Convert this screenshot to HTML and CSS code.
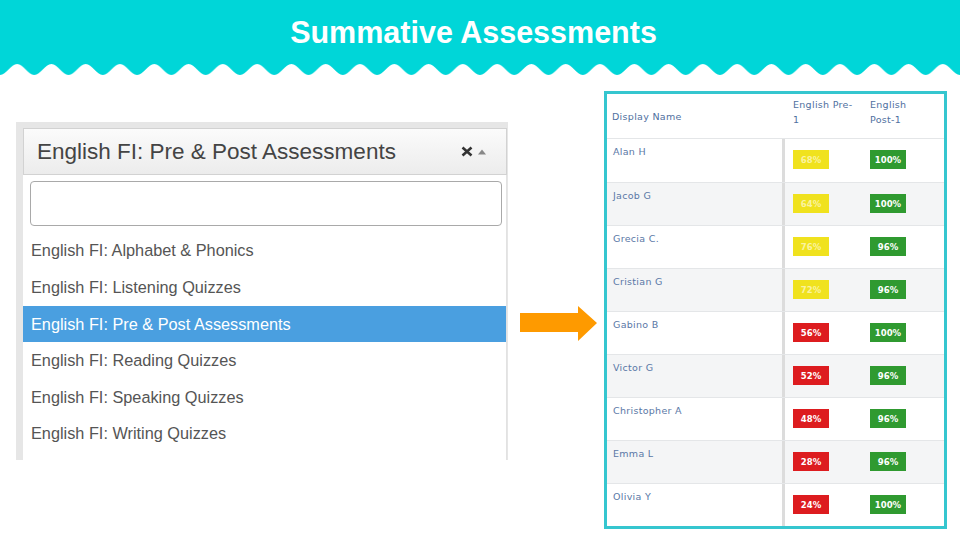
FILE: index.html
```html
<!DOCTYPE html>
<html lang="en">
<head>
<meta charset="utf-8">
<title>Summative Assessments</title>
<link rel="stylesheet" href="styles.css">
</head>
<body>
<header class="hero">
  <div class="hero-bar"><h1>Summative Assessments</h1></div>
  <svg class="wave" width="960" height="14" viewBox="0 0 960 14" aria-hidden="true">
    <defs>
      <pattern id="scallop" width="34.2857" height="14" patternUnits="userSpaceOnUse">
        <path d="M0 0 H34.2857 V13 C28.1 13 23.4 2 17.14 2 C10.9 2 6.2 13 0 13 Z" fill="#00d6d8"/>
      </pattern>
    </defs>
    <rect width="960" height="14" fill="url(#scallop)"/>
  </svg>
</header>

<main class="stage">
  <section class="dd">
    <div class="dd-select">
      <span class="dd-label">English FI: Pre &amp; Post Assessments</span>
      <span class="dd-icons">
        <svg width="12" height="11" viewBox="0 0 12 11"><path d="M1.5 1.5 L10.5 9.5 M10.5 1.5 L1.5 9.5" stroke="#333" stroke-width="2.6" stroke-linecap="butt"/></svg>
        <svg width="8" height="6" viewBox="0 0 8 6"><path d="M0 5.5 L4 0.5 L8 5.5 Z" fill="#888"/></svg>
      </span>
    </div>
    <div class="dd-drop">
      <div class="dd-search"></div>
      <ul class="dd-list">
        <li class="opt">English FI: Alphabet &amp; Phonics</li>
        <li class="opt">English FI: Listening Quizzes</li>
        <li class="opt on">English FI: Pre &amp; Post Assessments</li>
        <li class="opt">English FI: Reading Quizzes</li>
        <li class="opt">English FI: Speaking Quizzes</li>
        <li class="opt">English FI: Writing Quizzes</li>
      </ul>
    </div>
  </section>

  <svg class="arrow" width="77" height="37" viewBox="0 0 77 37" aria-hidden="true">
    <path d="M0 8 H58 V1 L77 18 L58 36 V27 H0 Z" fill="#fe9a00"/>
  </svg>

  <section class="scores">
    <div class="row head">
      <div class="cell name-h">Display Name</div>
      <div class="cell col-h">English Pre-<br>1</div>
      <div class="cell col-h">English<br>Post-1</div>
    </div>
    <div class="row"><div class="cell name">Alan H</div><div class="cell"><span class="badge y">68%</span></div><div class="cell"><span class="badge g">100%</span></div></div>
    <div class="row alt"><div class="cell name">Jacob G</div><div class="cell"><span class="badge y">64%</span></div><div class="cell"><span class="badge g">100%</span></div></div>
    <div class="row"><div class="cell name">Grecia C.</div><div class="cell"><span class="badge y">76%</span></div><div class="cell"><span class="badge g">96%</span></div></div>
    <div class="row alt"><div class="cell name">Cristian G</div><div class="cell"><span class="badge y">72%</span></div><div class="cell"><span class="badge g">96%</span></div></div>
    <div class="row"><div class="cell name">Gabino B</div><div class="cell"><span class="badge r">56%</span></div><div class="cell"><span class="badge g">100%</span></div></div>
    <div class="row alt"><div class="cell name">Victor G</div><div class="cell"><span class="badge r">52%</span></div><div class="cell"><span class="badge g">96%</span></div></div>
    <div class="row"><div class="cell name">Christopher A</div><div class="cell"><span class="badge r">48%</span></div><div class="cell"><span class="badge g">96%</span></div></div>
    <div class="row alt"><div class="cell name">Emma L</div><div class="cell"><span class="badge r">28%</span></div><div class="cell"><span class="badge g">96%</span></div></div>
    <div class="row"><div class="cell name">Olivia Y</div><div class="cell"><span class="badge r">24%</span></div><div class="cell"><span class="badge g">100%</span></div></div>
  </section>
</main>
</body>
</html>
```

FILE: styles.css
```css
* { box-sizing: border-box; }

body {
  margin: 0;
  width: 960px;
  height: 540px;
  overflow: hidden;
  background: #fff;
  font-family: "Liberation Sans", Arial, sans-serif;
}

/* Header */
.hero-bar {
  height: 62px;
  background: #00d6d8;
  display: flex;
  align-items: center;
  justify-content: center;
  padding: 2px 13px 0 0;
}
.hero-bar h1 {
  margin: 0;
  font: bold 30.5px "Liberation Sans", Arial, sans-serif;
  color: #fff;
}
.wave { display: block; }

/* Stage */
.stage {
  display: flex;
  align-items: flex-start;
  padding-left: 16px;
}

/* Dropdown */
.dd {
  width: 492px;
  height: 338px;
  margin-top: 46px;
  background: #e6e6e6;
  padding: 6px 1px 0 7px;
  display: flex;
  flex-direction: column;
}
.dd-select {
  height: 47px;
  border: 1px solid #d2d2d2;
  background: linear-gradient(#fbfbfb, #ececec);
  display: flex;
  align-items: center;
  padding-left: 13px;
  font-size: 22.5px;
  color: #444;
}
.dd-label { flex: 1; }
.dd-icons {
  display: flex;
  align-items: center;
  gap: 5px;
  margin-right: 20px;
}
.dd-drop {
  flex: 1;
  background: #fff;
  border-right: 1px solid #e2e2e2;
  padding-top: 6px;
}
.dd-search {
  height: 45px;
  margin: 0 4px 0 7px;
  border: 1px solid #a9a9a9;
  border-radius: 4px;
  background: #fff;
}
.dd-list {
  list-style: none;
  margin: 6.7px 0 0;
  padding: 0;
}
.opt {
  height: 36.6px;
  display: flex;
  align-items: center;
  padding-left: 8px;
  font-size: 16.3px;
  color: #555;
}
.opt.on {
  background: #4a9fe0;
  color: #fff;
}

/* Arrow */
.arrow {
  display: block;
  margin: 229px 0 0 12px;
}

/* Score table */
.scores {
  width: 343px;
  height: 438px;
  margin: 15px 0 0 7px;
  border: 3px solid #35c6cf;
  background: #fff;
  font-family: "DejaVu Sans", sans-serif;
  letter-spacing: 0.3px;
}
.row {
  display: grid;
  grid-template-columns: 178px 77px 1fr;
  height: 43px;
  border-top: 1px solid #e4e6e8;
}
.row.alt { background: #f4f5f6; }
.row.head {
  height: 45px;
  border-top: none;
  border-bottom: 1px solid #e4e6e8;
}
.row.head + .row { border-top: none; }

.cell { padding-left: 8px; }
.name-h {
  display: flex;
  align-items: center;
  padding-left: 5px;
  font-size: 9.5px;
  color: #4f70a0;
}
.col-h {
  padding-top: 3px;
  font-size: 9.5px;
  line-height: 15px;
  color: #4f70a0;
}
.name {
  padding: 7px 0 0 6px;
  font-size: 9.5px;
  line-height: 12px;
  color: #5a78a6;
  border-right: 3px solid #dcdcdc;
}
.badge {
  display: flex;
  align-items: center;
  justify-content: center;
  width: 36px;
  height: 19px;
  margin-top: 11px;
  font-size: 8.5px;
  font-weight: bold;
  letter-spacing: 0;
  color: #fff;
}
.badge.y { background: #f0e21e; color: #faf3a0; }
.badge.r { background: #dd1c1f; }
.badge.g { background: #2f9a30; }
```
